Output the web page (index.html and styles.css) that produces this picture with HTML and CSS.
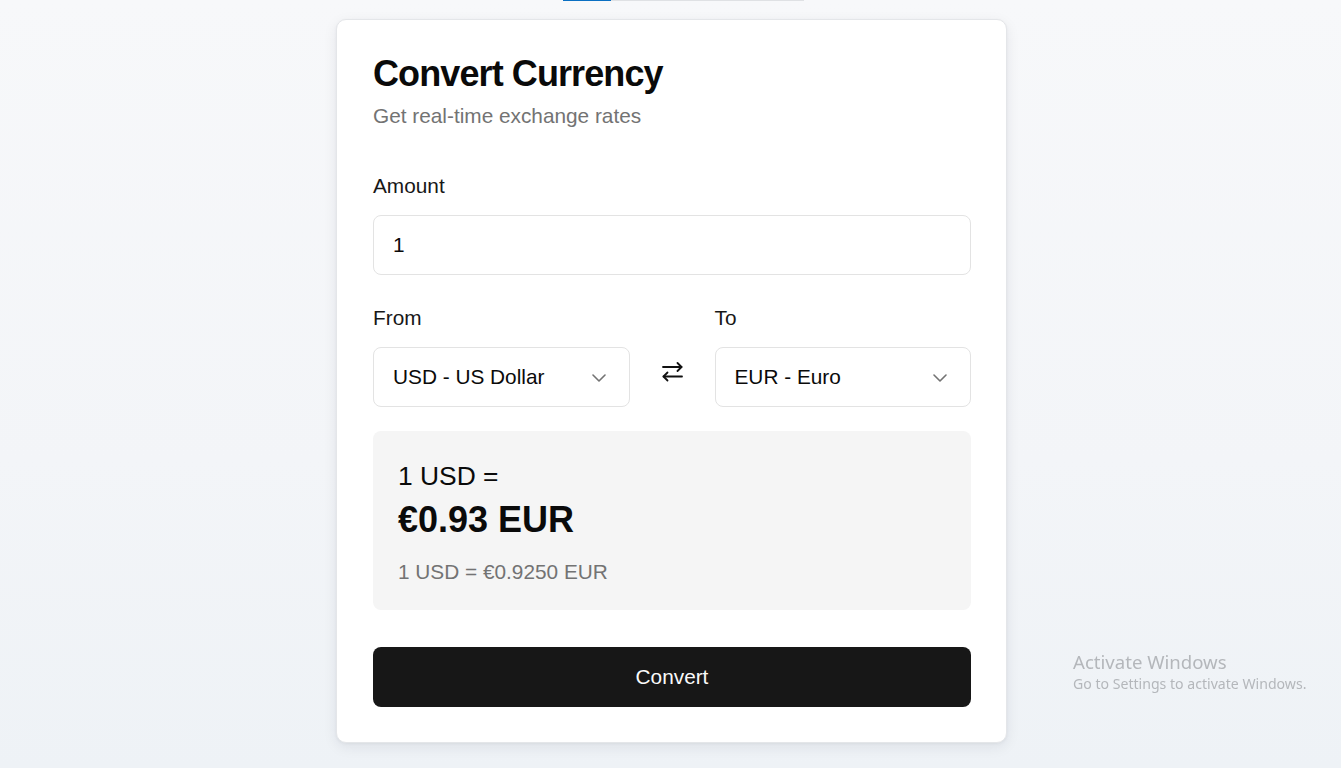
FILE: index.html
```html
<!DOCTYPE html>
<html lang="en">
<head>
<meta charset="utf-8">
<title>Convert Currency</title>
<link rel="stylesheet" href="styles.css">
</head>
<body>
<div class="page">
  <div class="tabstrip"><span class="tab-active"></span><span class="tab-rest"></span></div>
  <main class="card">
    <h1 class="title">Convert Currency</h1>
    <p class="subtitle">Get real-time exchange rates</p>

    <div class="field amount-field">
      <label class="label" for="amount">Amount</label>
      <input id="amount" class="input" type="text" value="1">
    </div>

    <div class="pair">
      <div class="field">
        <span class="label">From</span>
        <button class="select" type="button"><span>USD - US Dollar</span>
          <svg class="chev" width="14" height="8" viewBox="0 0 14 8"><polyline points="1,1 7,7 13,1" fill="none" stroke="currentColor" stroke-width="1.6" stroke-linecap="round" stroke-linejoin="round"/></svg>
        </button>
      </div>
      <div class="swap">
        <svg width="21" height="20" viewBox="0 0 21 20"><g fill="none" stroke="#111" stroke-width="1.8" stroke-linecap="round" stroke-linejoin="round"><path d="M1 5h18.5"/><path d="M15.5 1l4 4-4 4"/><path d="M20 14.5H1.5"/><path d="M5.5 10.5l-4 4 4 4"/></g></svg>
      </div>
      <div class="field">
        <span class="label">To</span>
        <button class="select" type="button"><span>EUR - Euro</span>
          <svg class="chev" width="14" height="8" viewBox="0 0 14 8"><polyline points="1,1 7,7 13,1" fill="none" stroke="currentColor" stroke-width="1.6" stroke-linecap="round" stroke-linejoin="round"/></svg>
        </button>
      </div>
    </div>

    <section class="result">
      <div class="result-base">1 USD =</div>
      <div class="result-value">€0.93 EUR</div>
      <div class="result-rate">1 USD = €0.9250 EUR</div>
    </section>

    <button class="convert" type="button">Convert</button>
  </main>
</div>
<div class="watermark">
  <div class="wm-title">Activate Windows</div>
  <div class="wm-sub">Go to Settings to activate Windows.</div>
</div>
</body>
</html>
```

FILE: styles.css
```css
* { box-sizing: border-box; }

html, body {
  margin: 0;
  height: 100%;
}

body {
  font-family: "Liberation Sans", Arial, sans-serif;
  background: linear-gradient(to bottom, #f7f8fa 0%, #f3f5f8 60%, #eef2f6 100%);
  color: #0a0a0a;
  overflow: hidden;
}

.page {
  display: flex;
  flex-direction: column;
  align-items: center;
  padding-left: 2px;
}

.tabstrip {
  display: flex;
  height: 1px;
  width: 241px;
  margin-left: 23px;
}

.tab-active { width: 48px; background: #0a6fc2; }
.tab-rest { flex: 1; background: #dfe1e4; }

.card {
  margin-top: 18px;
  width: 671px;
  background: #ffffff;
  border: 1px solid #e4e6e9;
  border-radius: 10px;
  box-shadow: 0 4px 14px rgba(20, 30, 50, 0.08), 0 1px 3px rgba(20, 30, 50, 0.05);
  padding: 35px 35px 35px 36px;
}

.title {
  margin: 0;
  font-size: 36px;
  line-height: 37px;
  font-weight: 700;
  letter-spacing: -0.9px;
  color: #0a0a0a;
}

.subtitle {
  margin: 10px 0 0;
  font-size: 20.8px;
  line-height: 28px;
  color: #737373;
}

.field {
  display: flex;
  flex-direction: column;
}

.amount-field { margin-top: 42px; }

.label {
  font-size: 20.8px;
  line-height: 28px;
  color: #171717;
}

.input {
  margin-top: 15px;
  height: 60px;
  width: 100%;
  border: 1px solid #e3e3e3;
  border-radius: 8px;
  padding: 0 19px;
  font-family: "Liberation Sans", Arial, sans-serif;
  font-size: 20.8px;
  color: #0a0a0a;
  background: #fff;
  outline: none;
}

.pair {
  margin-top: 29px;
  display: grid;
  grid-template-columns: 1fr 85px 1fr;
}

.select {
  margin-top: 15px;
  height: 60px;
  width: 100%;
  display: flex;
  align-items: center;
  justify-content: space-between;
  border: 1px solid #e3e3e3;
  border-radius: 8px;
  padding: 0 23px 0 19px;
  background: #fff;
  font-family: "Liberation Sans", Arial, sans-serif;
  font-size: 20.8px;
  color: #0a0a0a;
  text-align: left;
  cursor: pointer;
}

.chev { color: #737373; display: block; margin-top: 1px; }

.swap {
  display: flex;
  align-items: flex-end;
  justify-content: center;
  padding-bottom: 25px;
}

.swap svg { display: block; }

.result {
  margin-top: 24px;
  background: #f5f5f5;
  border-radius: 8px;
  padding: 25px 25px 24px;
}

.result-base {
  font-size: 26.4px;
  line-height: 40px;
  color: #0a0a0a;
}

.result-value {
  margin-top: 2px;
  font-size: 36px;
  line-height: 44px;
  font-weight: 700;
  color: #0a0a0a;
}

.result-rate {
  margin-top: 16px;
  font-size: 20.8px;
  line-height: 28px;
  color: #737373;
}

.convert {
  margin-top: 37px;
  width: 100%;
  height: 60px;
  border: none;
  border-radius: 8px;
  background: #171717;
  color: #fafafa;
  font-family: "Liberation Sans", Arial, sans-serif;
  font-size: 20.8px;
  cursor: pointer;
}

.watermark {
  position: fixed;
  left: 1073px;
  top: 650px;
  color: #b4b7bb;
  font-family: "Noto Sans", "Open Sans", sans-serif;
  pointer-events: none;
}

.wm-title {
  font-size: 18.6px;
  line-height: 24px;
}

.wm-sub {
  font-size: 14.1px;
  line-height: 20px;
}
```
